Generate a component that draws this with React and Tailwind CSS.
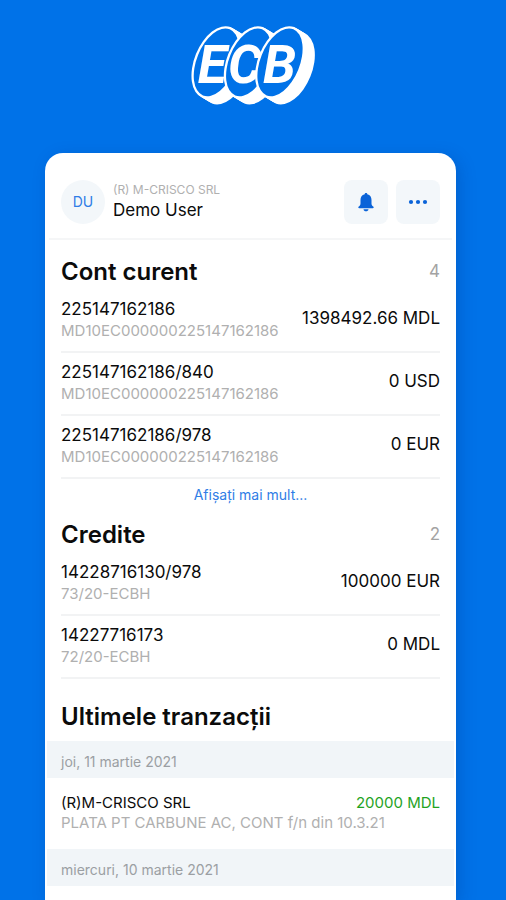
const conturi = [
  { numar: '225147162186', detalii: 'MD10EC000000225147162186', suma: '1398492.66 MDL' },
  { numar: '225147162186/840', detalii: 'MD10EC000000225147162186', suma: '0 USD' },
  { numar: '225147162186/978', detalii: 'MD10EC000000225147162186', suma: '0 EUR' },
];

const credite = [
  { numar: '14228716130/978', detalii: '73/20-ECBH', suma: '100000 EUR' },
  { numar: '14227716173', detalii: '72/20-ECBH', suma: '0 MDL' },
];

const discuri = [
  { litera: 'E', x: 112, tx: 56 },
  { litera: 'C', x: 209, tx: 147 },
  { litera: 'B', x: 303, tx: 252 },
];

// grosimea discului: elipse albe suprapuse spre dreapta jos
const pasi = [0, 1, 2, 3, 4, 5, 6];

function Logo() {
  return (
    <svg viewBox="30 24 384 252" className="w-32 h-21" role="img" aria-label="ECB">
      {discuri.map(d => (
        <g key={d.litera}>
          {pasi.map(p => (
            <ellipse
              key={p}
              rx="66"
              ry="114"
              fill="#fff"
              transform={`translate(${d.x + p * 5} ${142 + p * 3}) rotate(22)`}
            />
          ))}
          <ellipse rx="59" ry="107" fill="#0072e8" transform={`translate(${d.x} 142) rotate(22)`} />
          <text
            x={d.tx}
            y="203"
            fill="#fff"
            fontSize="160"
            className="font-['Roboto',sans-serif] font-bold italic"
          >
            {d.litera}
          </text>
        </g>
      ))}
    </svg>
  );
}

function Clopot() {
  return (
    <svg viewBox="0 0 18 20" className="w-[18px] h-5" fill="#0a63d8" aria-hidden="true">
      <path d="M9 1c.8 0 1.300.500 1.300 1.300C13.200 3 14.500 5.200 14.500 8v3.500c0 1.300.700 2.200 1.700 3 .9.700.6 1.700-.5 1.700H2.300c-1.100 0-1.400-1-.5-1.700 1-.8 1.700-1.700 1.700-3V8c0-2.800 1.300-5 4.200-5.700C7.700 1.500 8.200 1 9 1z" />
      <path d="M6.500 17.200h5C11.300 18.500 10.300 19.300 9 19.300s-2.300-.8-2.500-2.100z" />
    </svg>
  );
}

function Puncte() {
  return (
    <svg viewBox="0 0 20 6" className="w-5 h-1.5" fill="#0a63d8" aria-hidden="true">
      <circle cx="3" cy="3" r="2.100" />
      <circle cx="10" cy="3" r="2.100" />
      <circle cx="17" cy="3" r="2.100" />
    </svg>
  );
}

function Sectiune({ titlu, total, randuri }) {
  return (
    <section className="px-4">
      <div className="flex items-center justify-between h-9">
        <h2 className="text-2xl font-semibold">{titlu}</h2>
        <span className="text-[17px] text-[#a3a3a3]">{total}</span>
      </div>
      <ul>
        {randuri.map(r => (
          <li key={r.numar} className="flex items-center justify-between pt-[7px] pb-2.5 border-b-2 border-[#f2f3f4]">
            <div>
              <p className="text-[17px] leading-6">{r.numar}</p>
              <p className="text-[15px] leading-5 text-[#b0b0b0]">{r.detalii}</p>
            </div>
            <p className="text-[17px]">{r.suma}</p>
          </li>
        ))}
      </ul>
    </section>
  );
}

function Data({ children }) {
  return (
    <h3 className="mx-0.5 px-3.5 h-[37px] flex items-center pt-1 bg-[#f1f5f8] text-sm text-[#9b9fa3]">{children}</h3>
  );
}

export default function App() {
  return (
    <div className="min-h-screen flex flex-col bg-[#0072e8] font-['Inter',sans-serif] text-[#0b0b0b]">
      <header className="flex justify-center pt-[23px] pb-[46px]">
        <Logo />
      </header>

      <main className="flex-1 ml-[45px] mr-[50px] bg-white rounded-t-[18px] shadow-[4px_4px_16px_rgba(0,50,140,0.25)]">
        <div className="flex items-center mx-1 px-3 pt-3 h-[87px] border-b-2 border-[#f5f6f7]">
          <div className="size-11 rounded-full bg-[#f3f7fa] flex items-center justify-center text-sm text-[#2f7de6]">DU</div>
          <div className="ml-2 flex-1">
            <p className="text-xs leading-4 text-[#b0b0b0]">(R) M-CRISCO SRL</p>
            <p className="text-[17px] leading-6">Demo User</p>
          </div>
          <div className="flex gap-2">
            <button type="button" aria-label="Notificări" className="size-11 rounded-lg bg-[#f3f7fa] flex items-center justify-center">
              <Clopot />
            </button>
            <button type="button" aria-label="Meniu" className="size-11 rounded-lg bg-[#f3f7fa] flex items-center justify-center">
              <Puncte />
            </button>
          </div>
        </div>

        <div className="pt-3.5">
          <Sectiune titlu="Cont curent" total={4} randuri={conturi} />
        </div>
        <div className="flex justify-center pt-1.5 pb-3">
          <a href="#conturi" className="text-sm leading-5 text-[#2f7de6]">Afișați mai mult...</a>
        </div>
        <Sectiune titlu="Credite" total={2} randuri={credite} />

        <section className="pt-5">
          <h2 className="px-4 pb-1.5 text-2xl leading-9 font-semibold">Ultimele tranzacții</h2>
          <Data>joi, 11 martie 2021</Data>
          <div className="px-4 pt-[15px] pb-4">
            <div className="flex justify-between text-[15px] leading-5">
              <p>(R)M-CRISCO SRL</p>
              <p className="text-[#1fa31f]">20000 MDL</p>
            </div>
            <p className="text-[15px] leading-5 text-[#b0b0b0]">PLATA PT CARBUNE AC, CONT f/n din 10.3.21</p>
          </div>
          <Data>miercuri, 10 martie 2021</Data>
        </section>
      </main>
    </div>
  );
}
